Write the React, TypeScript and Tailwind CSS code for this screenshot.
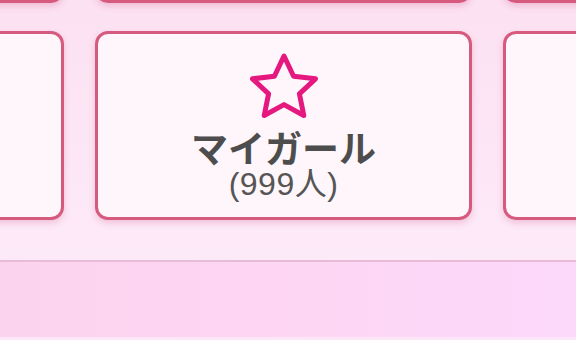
import React from "react";

function Card({ children }: { children?: React.ReactNode }) {
  return (
    <div className="w-[377px] h-[189px] shrink-0 rounded-[13px] border-[3px] border-[#d65a7e] bg-[#fff6fb] shadow-[0_3px_6px_rgba(210,90,140,0.28)] flex flex-col items-center">
      {children}
    </div>
  );
}

function Star() {
  return (
    <svg width="76" height="70" viewBox="0 0 76 70" fill="none">
      <path
        d="M38 4 L47.6 24.2 L69.5 26.8 L53.4 41.8 L57.8 63.5 L38 52.6 L18.2 63.5 L22.6 41.8 L6.5 26.8 L28.4 24.2 Z"
        stroke="#e4187f"
        strokeWidth="5"
        strokeLinejoin="round"
      />
    </svg>
  );
}

export default function App() {
  return (
    <div className="w-[576px] h-[340px] overflow-hidden bg-[#fde6f5] flex flex-col" style={{ fontFamily: '"Liberation Sans", "Noto Sans CJK JP", sans-serif' }}>
      <div className="bg-gradient-to-b from-[#fce1f1] to-[#fdeaf8] flex flex-col h-[260px] shrink-0">
        <div className="flex gap-[31px] ml-[-313px] mt-[-186px] shrink-0">
          <Card />
          <Card />
          <Card />
        </div>
        <div className="flex gap-[31px] ml-[-313px] mt-[28px] shrink-0">
          <Card />
          <Card>
            <div className="mt-[18px] h-[70px]">
              <Star />
            </div>
            <div className="mt-[5px] text-[37px] leading-[40px] font-bold text-[#4d4d4d]" style={{ fontFamily: '"Noto Sans CJK JP", sans-serif' }}>
              マイガール
            </div>
            <div className="text-[32px] leading-[34px] text-[#555555] tracking-[0.5px]">
              (999人)
            </div>
          </Card>
          <Card />
        </div>
      </div>
      <div className="h-[2px] bg-[#e8bcd6] shrink-0" />
      <div className="flex-1 bg-gradient-to-r from-[#fcd3ef] via-[#fdd6f3] to-[#fcd8fa]" />
      <div className="h-[3px] bg-[#fde6f7] shrink-0" />
    </div>
  );
}
